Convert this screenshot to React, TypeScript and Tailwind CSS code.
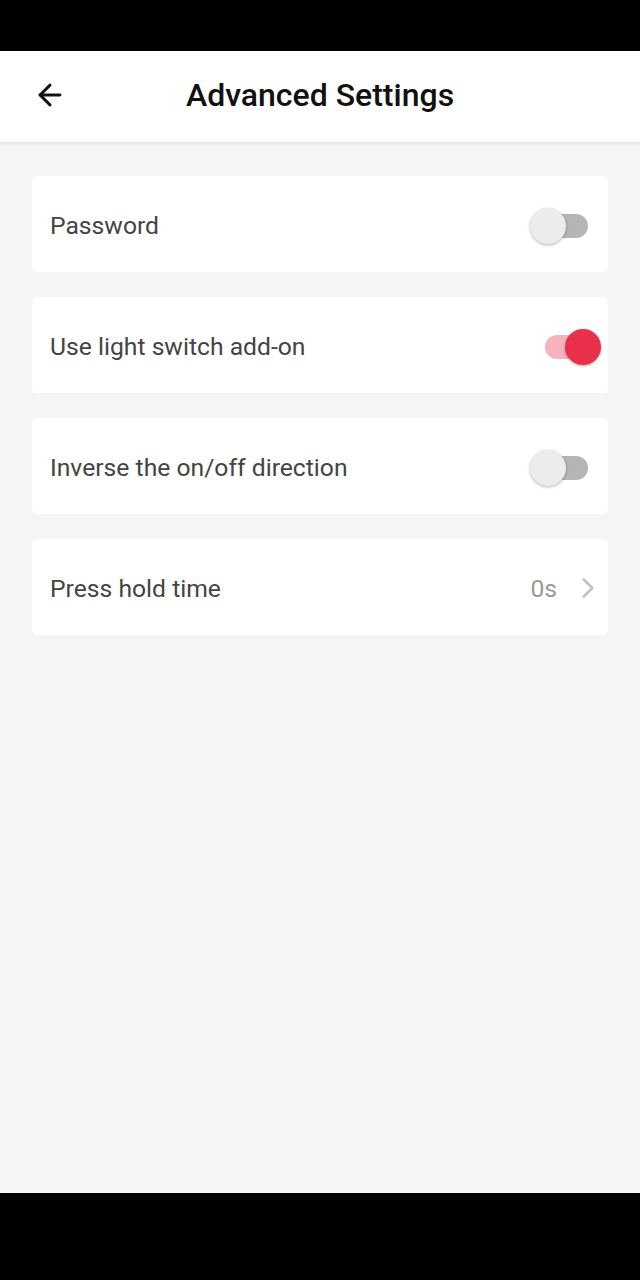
import { ArrowLeft, ChevronRight } from "lucide-react"

type Row =
  | { kind: "toggle"; label: string; on: boolean }
  | { kind: "value"; label: string; value: string }

const rows: Row[] = [
  { kind: "toggle", label: "Password", on: false },
  { kind: "toggle", label: "Use light switch add-on", on: true },
  { kind: "toggle", label: "Inverse the on/off direction", on: false },
  { kind: "value", label: "Press hold time", value: "0s" },
]

function Switch({ on }: { on: boolean }) {
  return (
    <div className="relative h-[40px] w-[72px]">
      <div
        className={
          on
            ? "absolute left-[15px] top-[8px] h-[24px] w-[46px] rounded-full bg-[#f7b3bd]"
            : "absolute left-[10px] top-[8px] h-[24px] w-[48px] rounded-full bg-[#b5b5b5]"
        }
      />
      <div
        className={
          on
            ? "absolute left-[35px] top-[2px] h-[36px] w-[36px] rounded-full bg-[#e8304a] shadow-[0_1px_3px_rgba(0,0,0,0.3)]"
            : "absolute left-[0px] top-[2px] h-[36px] w-[36px] rounded-full bg-[#ececec] shadow-[0_1px_3px_rgba(0,0,0,0.3)]"
        }
      />
    </div>
  )
}

export default function App() {
  return (
    <div className="flex h-[1280px] w-[640px] flex-col bg-black font-['Roboto',sans-serif]">
      {/* status bar */}
      <div className="h-[51px] shrink-0 bg-black" />

      {/* header */}
      <header className="relative z-10 flex h-[91px] shrink-0 items-center bg-white pb-[3px] shadow-[0_2px_4px_rgba(0,0,0,0.08)]">
        <div className="flex w-[100px] items-center pl-[33px]">
          <ArrowLeft className="h-[34px] w-[34px] text-[#111]" strokeWidth={2.1} />
        </div>
        <h1 className="flex-1 pr-[100px] text-center text-[32px] font-medium text-[#111]">
          Advanced Settings
        </h1>
      </header>

      {/* settings list */}
      <main className="flex flex-1 flex-col gap-[25px] bg-[#f5f5f5] px-[32px] pt-[34px]">
        {rows.map((row) => (
          <div
            key={row.label}
            className="flex h-[96px] items-center justify-between rounded-[5px] bg-white pl-[18px] pr-[6px] pt-[3px]"
          >
            <span className="text-[24.7px] text-[#444]">{row.label}</span>
            {row.kind === "toggle" ? (
              <Switch on={row.on} />
            ) : (
              <div className="mr-[-3px] flex items-center gap-[14px]">
                <span className="text-[24.7px] text-[#999]">{row.value}</span>
                <ChevronRight className="h-[34px] w-[34px] text-[#c4c4c4]" strokeWidth={2} />
              </div>
            )}
          </div>
        ))}
      </main>

      {/* nav bar */}
      <div className="h-[87px] shrink-0 bg-black" />
    </div>
  )
}
